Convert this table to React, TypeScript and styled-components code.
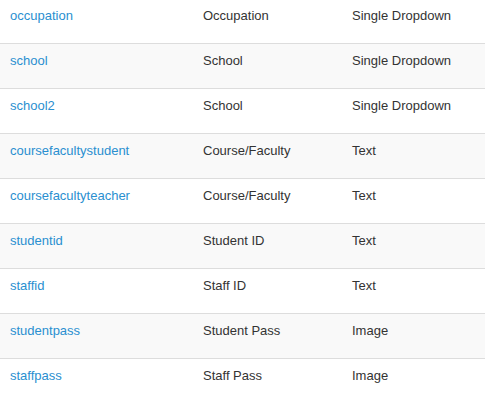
import React from "react";
import styled, { createGlobalStyle } from "styled-components";

const Global = createGlobalStyle`
  html, body { margin: 0; padding: 0; background: #fff; }
  body { font-family: "Liberation Sans", Arial, Helvetica, sans-serif; }
`;

const Table = styled.div`
  margin-top: -2px;
  width: 485px;
  display: flex;
  flex-direction: column;
`;

const Row = styled.div<{ $striped: boolean }>`
  display: grid;
  grid-template-columns: 193px 149px 1fr;
  height: 44px;
  border-top: 1px solid #dddddd;
  background: ${(p) => (p.$striped ? "#f9f9f9" : "#ffffff")};
`;

const Cell = styled.div`
  padding: 8px 10px 0 10px;
  font-size: 13px;
  line-height: 18px;
  color: #333333;
  white-space: nowrap;
`;

const Link = styled.a`
  color: #2a8fd0;
  text-decoration: none;
`;

const rows = [
  ["occupation", "Occupation", "Single Dropdown"],
  ["school", "School", "Single Dropdown"],
  ["school2", "School", "Single Dropdown"],
  ["coursefacultystudent", "Course/Faculty", "Text"],
  ["coursefacultyteacher", "Course/Faculty", "Text"],
  ["studentid", "Student ID", "Text"],
  ["staffid", "Staff ID", "Text"],
  ["studentpass", "Student Pass", "Image"],
  ["staffpass", "Staff Pass", "Image"],
];

export default function App() {
  return (
    <>
      <Global />
      <Table>
        {rows.map(([key, label, type], i) => (
          <Row key={key} $striped={i % 2 === 1}>
            <Cell>
              <Link href="#">{key}</Link>
            </Cell>
            <Cell>{label}</Cell>
            <Cell>{type}</Cell>
          </Row>
        ))}
      </Table>
    </>
  );
}
